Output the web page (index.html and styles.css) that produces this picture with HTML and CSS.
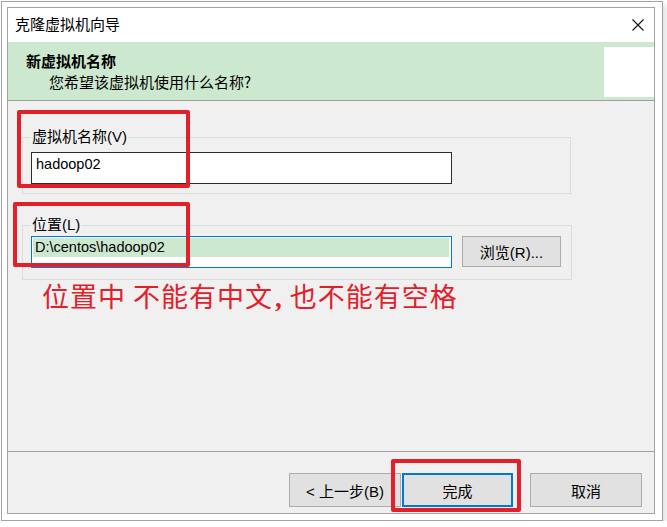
FILE: index.html
```html
<!DOCTYPE html>
<html lang="zh-CN">
<head>
    <meta charset="UTF-8">
    <title>克隆虚拟机向导</title>
    <link rel="stylesheet" href="styles.css">
</head>
<body>
    <div class="frame">
        <div class="dialog">
            <div class="titlebar">
                <span class="title">克隆虚拟机向导</span>
                <svg class="close" width="12" height="12" viewBox="0 0 12 12">
                    <path d="M0.5 0.5 L11.5 11.5 M11.5 0.5 L0.5 11.5" stroke="#111" stroke-width="1.1" fill="none"/>
                </svg>
            </div>

            <div class="banner">
                <div class="banner-text">
                    <div class="banner-title">新虚拟机名称</div>
                    <div class="banner-sub">您希望该虚拟机使用什么名称?</div>
                </div>
                <div class="banner-icon"></div>
            </div>

            <div class="content">
                <fieldset class="group group-name">
                    <legend>虚拟机名称(V)</legend>
                    <div class="field">hadoop02</div>
                </fieldset>

                <fieldset class="group group-loc">
                    <legend>位置(L)</legend>
                    <div class="row">
                        <div class="field focused"><span class="sel">D:\centos\hadoop02</span></div>
                        <button class="btn browse">浏览(R)...</button>
                    </div>
                </fieldset>

                <p class="note">位置中 不能有中文<b class="comma">,</b> 也不能有空格</p>
            </div>

            <div class="footer">
                <button class="btn back">&lt; 上一步(B)</button>
                <button class="btn finish">完成</button>
                <button class="btn cancel">取消</button>
            </div>
        </div>
    </div>

    <!-- red annotation boxes drawn over the dialog -->
    <div class="mark mark-name"></div>
    <div class="mark mark-loc"></div>
    <div class="mark mark-finish"></div>
</body>
</html>
```

FILE: styles.css
```css
body {
    margin: 0;
    background: #fff;
    font-family: "Liberation Sans", "Noto Sans CJK SC", sans-serif;
    font-size: 15px;
    color: #000;
}
.frame {
    box-sizing: border-box;
    width: 662px;
    height: 520px;
    margin: 1px 0 0 1px;
    padding: 5px 7px 6px 5px;
    background: #fff;
    border: 1px solid #a3a3a3;
    box-shadow: 3px 3px 5px rgba(0,0,0,0.12);
}
.dialog {
    height: 507px;
    border: 1px solid #a3a3a3;
    background: #f0f0f0;
    display: flex;
    flex-direction: column;
    box-sizing: border-box;
}
.titlebar {
    height: 34px;
    flex: none;
    background: #fff;
    display: flex;
    align-items: center;
    justify-content: space-between;
    padding: 0 10px 0 7px;
}
.title {
    font-family: "Noto Sans CJK SC", sans-serif;
    font-size: 15px;
    line-height: 20px;
    margin-top: -3px;
}
.close {
    display: block;
    margin-top: -1px;
}
.banner {
    height: 58px;
    flex: none;
    background: #cce8cf;
    border-bottom: 1px solid #a0a0a0;
    display: flex;
}
.banner-text {
    padding: 8px 0 0 18px;
    font-family: "Noto Sans CJK SC", sans-serif;
    line-height: 21px;
}
.banner-title {
    font-weight: bold;
}
.banner-sub {
    padding-left: 23px;
}
.banner-icon {
    width: 50px;
    height: 50px;
    margin: 5px 0 0 auto;
    background: #fff;
}
.content {
    height: 350px;
    flex: none;
    padding: 26px 0 0 14px;
    box-sizing: border-box;
}
.group {
    box-sizing: border-box;
    width: 549px;
    margin: 0;
    border: 1px solid #dcdcdc;
    padding: 5px 8px 9px 8px;
}
.group legend {
    padding: 0 1px;
    line-height: 20px;
    font-family: "Liberation Sans", "Noto Sans CJK SC", sans-serif;
}
.group-loc {
    margin-top: 21px;
    width: 550px;
    padding: 1px 8px 11px 8px;
}
.field {
    box-sizing: border-box;
    width: 421px;
    height: 32px;
    background: #fff;
    border: 1px solid #2b2b2b;
    padding: 2px 0 0 4px;
    line-height: 19px;
    font-size: 14.5px;
}
.field.focused {
    height: 32px;
    border-color: #0078d7;
    padding: 1px 0 0 1px;
}
.sel {
    display: block;
    width: 416px;
    height: 19px;
    padding-left: 2px;
    box-sizing: border-box;
    background: #cce8cf;
}
.row {
    display: flex;
    align-items: flex-start;
    gap: 10px;
}
.btn {
    box-sizing: border-box;
    height: 34px;
    width: 112px;
    background: #e1e1e1;
    border: 1px solid #adadad;
    font-family: "Liberation Sans", "Noto Sans CJK SC", sans-serif;
    font-size: 15px;
    color: #000;
    padding: 0;
}
.btn.browse {
    width: 99px;
    height: 31px;
}
.note {
    margin: 0;
    padding-left: 20px;
    font-family: "Noto Sans CJK SC", sans-serif;
    font-size: 27px;
    line-height: 32px;
    letter-spacing: 1px;
    color: #e3202a;
}
.note .comma {
    font-family: "Liberation Serif", serif;
    margin-left: 2px;
}
.footer {
    flex: 1;
    border-top: 1px solid #a0a0a0;
    display: flex;
    justify-content: flex-end;
    align-items: flex-start;
    padding: 21px 12px 0 0;
}
.btn.finish {
    width: 111px;
    margin-left: 1px;
    border: 2px solid #0078d7;
}
.btn.cancel {
    margin-left: 17px;
}
.mark {
    position: absolute;
    box-sizing: border-box;
    border: 4px solid #e3202a;
    border-radius: 2px;
}
.mark-name {
    left: 17px;
    top: 110px;
    width: 173px;
    height: 78px;
}
.mark-loc {
    left: 13px;
    top: 202px;
    width: 177px;
    height: 65px;
}
.mark-finish {
    left: 391px;
    top: 459px;
    width: 130px;
    height: 53px;
}
```
